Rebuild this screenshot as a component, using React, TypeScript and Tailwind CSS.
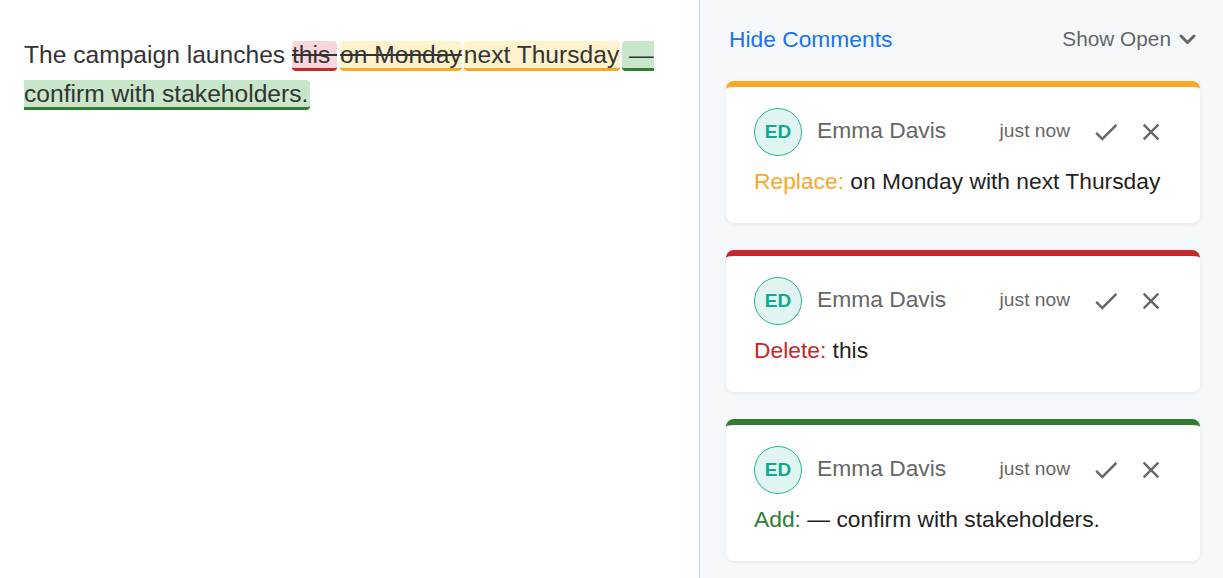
import React from 'react';

type Kind = 'replace' | 'delete' | 'add';

const labelStyles: Record<Kind, { label: string; bar: string; text: string }> = {
	replace: { label: 'Replace:', bar: 'border-t-[#f9a825]', text: 'text-[#f9a825]' },
	delete: { label: 'Delete:', bar: 'border-t-[#c62828]', text: 'text-[#c62828]' },
	add: { label: 'Add:', bar: 'border-t-[#2e7d32]', text: 'text-[#2e7d32]' },
};

const comments: { id: number; kind: Kind; body: string }[] = [
	{ id: 1, kind: 'replace', body: 'on Monday with next Thursday' },
	{ id: 2, kind: 'delete', body: 'this' },
	{ id: 3, kind: 'add', body: '— confirm with stakeholders.' },
];

const CheckIcon = () => (
	<svg width="30" height="30" viewBox="0 0 24 24" fill="#666">
		<path d="M9 16.17L4.83 12l-1.42 1.41L9 19 21 7l-1.41-1.41z" />
	</svg>
);

const CloseIcon = () => (
	<svg width="28" height="28" viewBox="0 0 24 24" fill="#666">
		<path d="M19 6.41L17.59 5 12 10.59 6.41 5 5 6.41 10.59 12 5 17.59 6.41 19 12 13.41 17.59 19 19 17.59 13.41 12z" />
	</svg>
);

const Chevron = () => (
	<svg width="17" height="11" viewBox="0 0 17 11" fill="none" stroke="#666" strokeWidth="3" strokeLinecap="round" strokeLinejoin="round">
		<polyline points="2,2 8.5,8.5 15,2" />
	</svg>
);

const CommentCard: React.FC<{ kind: Kind; body: string }> = ({ kind, body }) => {
	const s = labelStyles[kind];
	return (
		<div className={`bg-white rounded-lg border-t-[6px] ${s.bar} shadow-[0_1px_4px_rgba(0,0,0,0.08)] pt-[21px] px-[28px] pb-[25px]`}>
			<div className="flex items-center h-12">
				<div className="w-12 h-12 rounded-full border border-[#26b39a] bg-[#e0f5f1] flex items-center justify-center text-[#0fa98f] font-bold text-[19px]">
					ED
				</div>
				<span className="ml-[15px] flex-1 text-[22.8px] text-[#666] -mt-[4px]">Emma Davis</span>
				<span className="text-[19.2px] text-[#666] -mt-[2px]">just now</span>
				<button className="ml-[21px] flex items-center justify-center">
					<CheckIcon />
				</button>
				<button className="ml-[16px] mr-[7px] flex items-center justify-center">
					<CloseIcon />
				</button>
			</div>
			<p className="mt-[8px] text-[22.8px] leading-[34px] text-[#1f1f1f]">
				<span className={s.text}>{s.label}</span> {body}
			</p>
		</div>
	);
};

export default function App() {
	return (
		<div className="flex h-screen w-full bg-white text-[#333]" style={{ fontFamily: '"Liberation Sans", Arial, sans-serif' }}>
			{/* Document editor */}
			<div className="w-[700px] shrink-0 border-r border-[#d0d4d9] pt-[35px] px-6">
				<p className="text-[24.6px] leading-[39px]">
					The campaign launches{' '}
					<span className="bg-[#f8d7da] border-b-[3px] border-[#c62828] rounded-[4px] line-through">this </span>
					<span className="bg-[#fff3cd] border-b-[3px] border-[#f9a825] rounded-[4px] line-through ml-[3px]">on Monday</span>
					<span className="bg-[#fff3cd] border-b-[3px] border-[#f9a825] rounded-[4px] ml-[2px] pr-[1px]">next Thursday</span>
					<span className="bg-[#c8e6c9] border-b-[3px] border-[#2e7d32] rounded-[4px] ml-[2px] pr-[2px]"> — confirm with stakeholders.</span>
				</p>
			</div>

			{/* Comments sidebar */}
			<div className="flex-1 bg-[#f5f9fc] pt-6 pl-[26px] pr-[23px]">
				<div className="flex items-center justify-between h-[30px] mb-[27px] pl-[3px] pr-[4px]">
					<button className="text-[22.8px] text-[#1a73e8]">Hide Comments</button>
					<button className="flex items-center gap-2 text-[20.8px] text-[#666]">
						Show Open
						<Chevron />
					</button>
				</div>
				<div className="flex flex-col gap-[27px]">
					{comments.map(c => (
						<CommentCard key={c.id} kind={c.kind} body={c.body} />
					))}
				</div>
			</div>
		</div>
	);
}
